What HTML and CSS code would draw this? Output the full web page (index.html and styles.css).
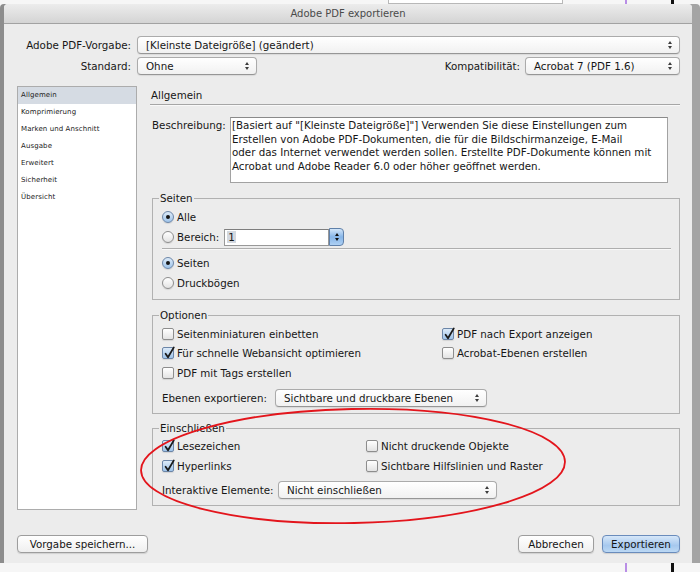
FILE: index.html
```html
<!DOCTYPE html>
<html lang="de">
<head>
  <meta charset="UTF-8">
  <title>Adobe PDF exportieren</title>
  <link rel="stylesheet" href="styles.css">
</head>
<body>
  <div class="backdrop-top"><div class="behind-panel"></div></div>

  <div class="dialog">
    <div class="titlebar">Adobe PDF exportieren</div>

    <div class="dialog-body">
      <div class="preset-row">
        <span class="lbl lbl-right">Adobe PDF-Vorgabe:</span>
        <div class="popup"><span class="val">[Kleinste Dateigröße] (geändert)</span><span class="arrows"></span></div>
      </div>

      <div class="std-row">
        <span class="lbl lbl-right">Standard:</span>
        <div class="popup popup-std"><span class="val">Ohne</span><span class="arrows"></span></div>
        <span class="spacer"></span>
        <span class="lbl lbl-compat">Kompatibilität:</span>
        <div class="popup popup-compat"><span class="val">Acrobat 7 (PDF 1.6)</span><span class="arrows"></span></div>
      </div>

      <div class="panes">
        <ul class="sidebar">
          <li class="sel">Allgemein</li>
          <li>Komprimierung</li>
          <li>Marken und Anschnitt</li>
          <li>Ausgabe</li>
          <li>Erweitert</li>
          <li>Sicherheit</li>
          <li>Übersicht</li>
        </ul>

        <div class="main">
          <div class="main-head">Allgemein</div>

          <div class="desc-row">
            <span class="desc-label">Beschreibung:</span>
            <div class="desc-box">
              [Basiert auf "[Kleinste Dateigröße]"] Verwenden Sie diese Einstellungen zum<br>
              Erstellen von Adobe PDF-Dokumenten, die für die Bildschirmanzeige, E-Mail<br>
              oder das Internet verwendet werden sollen. Erstellte PDF-Dokumente können mit<br>
              Acrobat und Adobe Reader 6.0 oder höher geöffnet werden.
            </div>
          </div>

          <fieldset class="group group-pages">
            <legend>Seiten</legend>
            <div class="opt"><span class="radio on"></span>Alle</div>
            <div class="opt">
              <span class="radio"></span>Bereich:
              <span class="field"><span class="sel-text">1</span></span><span class="stepper"><span class="arrows"></span></span>
            </div>
            <div class="divider"></div>
            <div class="opt"><span class="radio on"></span>Seiten</div>
            <div class="opt"><span class="radio"></span>Druckbögen</div>
          </fieldset>

          <fieldset class="group group-options">
            <legend>Optionen</legend>
            <div class="opt-grid">
              <div class="opt"><span class="check"></span>Seitenminiaturen einbetten</div>
              <div class="opt"><span class="check on"><svg viewBox="0 0 12 12"><path d="M2.6 5.8 L5 9.2 L10.8 -0.6"/></svg></span>PDF nach Export anzeigen</div>
              <div class="opt"><span class="check on"><svg viewBox="0 0 12 12"><path d="M2.6 5.8 L5 9.2 L10.8 -0.6"/></svg></span>Für schnelle Webansicht optimieren</div>
              <div class="opt"><span class="check"></span>Acrobat-Ebenen erstellen</div>
              <div class="opt"><span class="check"></span>PDF mit Tags erstellen</div>
            </div>
            <div class="select-row">
              <span class="select-label layers-label">Ebenen exportieren:</span>
              <div class="popup popup-layers"><span class="val">Sichtbare und druckbare Ebenen</span><span class="arrows"></span></div>
            </div>
          </fieldset>

          <fieldset class="group group-include">
            <legend>Einschließen</legend>
            <div class="incl-grid">
              <div class="opt"><span class="check on"><svg viewBox="0 0 12 12"><path d="M2.6 5.8 L5 9.2 L10.8 -0.6"/></svg></span>Lesezeichen</div>
              <div class="opt"><span class="check"></span>Nicht druckende Objekte</div>
              <div class="opt"><span class="check on"><svg viewBox="0 0 12 12"><path d="M2.6 5.8 L5 9.2 L10.8 -0.6"/></svg></span>Hyperlinks</div>
              <div class="opt"><span class="check"></span>Sichtbare Hilfslinien und Raster</div>
            </div>
            <div class="select-row select-row-tight">
              <span class="select-label interactive-label">Interaktive Elemente:</span>
              <div class="popup popup-interactive"><span class="val">Nicht einschließen</span><span class="arrows"></span></div>
            </div>
          </fieldset>
        </div>
      </div>

      <div class="footer">
        <button class="btn btn-save">Vorgabe speichern...</button>
        <span class="spacer"></span>
        <button class="btn btn-cancel">Abbrechen</button>
        <button class="btn btn-default">Exportieren</button>
      </div>
    </div>
  </div>

  <svg class="annotation" width="700" height="572" viewBox="0 0 700 572">
    <ellipse cx="353" cy="466" rx="212" ry="57" transform="rotate(-1.2 353 466)"/>
  </svg>
</body>
</html>
```

FILE: styles.css
```css
* {
  margin: 0;
  padding: 0;
  box-sizing: border-box;
}

html, body {
  width: 700px;
  height: 572px;
  overflow: hidden;
}

body {
  position: relative;
  font-family: "DejaVu Sans", sans-serif;
  font-size: 10.3px;
  color: #161616;
  background:
    linear-gradient(to right, transparent 625px, #b98ee6 625px, #b98ee6 627px, transparent 627px),
    linear-gradient(to right, transparent 671px, #111 671px, #111 674px, transparent 674px),
    #f6f6f6;
}

.backdrop-top {
  height: 4px;
}

.behind-panel {
  margin-left: 388px;
  width: 175px;
  height: 4px;
  background: #fff;
  border: 1px solid #b8b8b8;
  border-top: 0;
}

.dialog {
  margin-left: 4px;
  width: 688px;
  background: #ececec;
  border-radius: 4px 4px 0 0;
  box-shadow: -4px 0 0 #8d8d8d, 8px 0 0 #a4a4a4;
}

.titlebar {
  height: 20px;
  line-height: 19px;
  text-align: center;
  font-size: 10px;
  color: #4a4a4a;
  background: linear-gradient(#ececec, #d4d4d4);
  border-bottom: 1px solid #a2a2a2;
  border-radius: 4px 4px 0 0;
}

.dialog-body {
  padding: 12px 12px 10px 13px;
}

.preset-row {
  display: grid;
  grid-template-columns: 114px 1fr;
  column-gap: 6px;
  align-items: center;
}

.std-row {
  display: flex;
  align-items: center;
  margin-top: 3px;
}

.lbl-right {
  text-align: right;
}

.std-row .lbl-right {
  width: 114px;
  margin-right: 6px;
}

.lbl-compat {
  margin-right: 5px;
}

.spacer {
  flex: 1;
}

/* popup buttons */
.popup {
  display: flex;
  align-items: center;
  height: 18px;
  padding: 0 7px 0 8px;
  background: linear-gradient(#ffffff, #f1f1f1);
  border: 1px solid #ababab;
  border-bottom-color: #969696;
  border-radius: 4px;
  box-shadow: 0 1px 1px rgba(0, 0, 0, 0.08);
  white-space: nowrap;
}

.popup .val {
  flex: 1;
  line-height: 16px;
}

.popup-std {
  width: 120px;
}

.popup-compat {
  width: 155px;
}

.arrows {
  display: flex;
  flex-direction: column;
  gap: 2px;
}

.arrows::before,
.arrows::after {
  content: "";
  border-left: 2.5px solid transparent;
  border-right: 2.5px solid transparent;
}

.arrows::before {
  border-bottom: 3px solid #3c3c3c;
}

.arrows::after {
  border-top: 3px solid #3c3c3c;
}

/* left list + main page */
.panes {
  display: flex;
  margin-top: 11px;
  height: 424px;
}

.sidebar {
  width: 120px;
  list-style: none;
  background: #fff;
  border: 1px solid #acacac;
}

.sidebar li {
  height: 17px;
  line-height: 17px;
  padding-left: 3px;
  font-size: 7px;
  letter-spacing: 0.1px;
  color: #222;
}

.sidebar li.sel {
  background: #d5dbe3;
}

.main {
  flex: 1;
  margin-left: 13px;
}

.main-head {
  height: 19px;
  line-height: 18px;
  padding-left: 1px;
  border-bottom: 1px solid #a6a6a6;
  box-shadow: 0 1px 0 #f9f9f9;
}

.desc-row {
  display: flex;
  margin-top: 12px;
  padding-left: 2px;
}

.desc-label {
  width: 78px;
  padding-top: 2px;
  line-height: 13.7px;
}

.desc-box {
  width: 438px;
  height: 66px;
  padding: 1px 1px;
  line-height: 13.7px;
  white-space: nowrap;
  overflow: hidden;
  background: #fff;
  border: 1px solid #a2a2a2;
  border-top-color: #8a8a8a;
}

/* group boxes */
.group {
  margin: 9px 0 0 2px;
  padding: 3px 8px 6px 9px;
  border: 1px solid #b1b1b1;
  min-width: 0;
}

.group legend {
  margin-left: -3px;
  padding: 0 1px;
  line-height: 12px;
}

.group-include {
  margin-top: 8px;
}

.group-include {
  padding-top: 2px;
}

.opt {
  display: flex;
  align-items: center;
  height: 20px;
  gap: 3px;
  white-space: nowrap;
}

.opt-grid {
  display: grid;
  grid-template-columns: 280px 1fr;
  grid-auto-rows: 19.5px;
}

.opt-grid .opt {
  height: 19.5px;
}

.incl-grid {
  display: grid;
  grid-template-columns: 204px 1fr;
  grid-auto-rows: 20px;
}

.radio,
.check {
  flex: none;
  display: grid;
  place-items: center;
  width: 12px;
  height: 12px;
  border: 1px solid #8d8d8d;
  background: linear-gradient(#ffffff, #e3e3e3);
  box-shadow: 0 1px 1px rgba(0, 0, 0, 0.1);
}

.radio {
  border-radius: 50%;
}

.check {
  border-radius: 2px;
}

.radio.on,
.check.on {
  background: linear-gradient(#dceaf8, #9fc4ea);
  border-color: #6c86a8;
}

.radio.on::after {
  content: "";
  width: 4px;
  height: 4px;
  border-radius: 50%;
  background: #151515;
}

.check svg {
  width: 12px;
  height: 12px;
  overflow: visible;
}

.check svg path {
  fill: none;
  stroke: #1b1b1b;
  stroke-width: 1.8;
  stroke-linecap: round;
  stroke-linejoin: round;
}

.field {
  margin-left: 2px;
  width: 105px;
  height: 17px;
  padding-left: 2px;
  line-height: 15px;
  background: #fff;
  border: 1px solid #999;
  border-top-color: #7e7e7e;
}

.sel-text {
  background: #d3d8df;
  padding: 0 1px;
}

.stepper {
  display: grid;
  place-items: center;
  width: 15px;
  height: 18px;
  margin-left: -3px;
  background: linear-gradient(#d3e6f9, #86b5e8 50%, #aed0f3);
  border: 1px solid #5f80a9;
  border-radius: 0 4px 4px 0;
}

.stepper .arrows::before {
  border-bottom-color: #111;
}

.stepper .arrows::after {
  border-top-color: #111;
}

.divider {
  height: 1px;
  margin: 1px 0 4px;
  background: #aeaeae;
  box-shadow: 0 1px 0 #f8f8f8;
}

.select-row {
  display: flex;
  align-items: center;
  margin-top: 6.5px;
}

.select-row-tight {
  margin-top: 5px;
}

.layers-label {
  width: 113px;
}

.interactive-label {
  width: 116px;
}

.popup-layers {
  width: 212px;
}

.popup-interactive {
  width: 219px;
}

/* bottom buttons */
.footer {
  display: flex;
  gap: 8px;
  margin-top: 25px;
}

.btn {
  height: 18px;
  font: inherit;
  line-height: 16px;
  color: #141414;
  background: linear-gradient(#ffffff, #efefef);
  border: 1px solid #9d9d9d;
  border-radius: 4px;
  box-shadow: 0 1px 1px rgba(0, 0, 0, 0.12);
}

.btn-save {
  width: 131px;
}

.btn-cancel {
  width: 76px;
}

.btn-default {
  width: 78px;
  background: linear-gradient(#d6e7f9, #a6c8ee 60%, #bcd8f4);
  border-color: #6a8cbc;
}

/* red marker drawn over the screenshot */
.annotation {
  position: absolute;
  left: 0;
  top: 0;
  pointer-events: none;
}

.annotation ellipse {
  fill: none;
  stroke: #e3151c;
  stroke-width: 1.8;
}
```
